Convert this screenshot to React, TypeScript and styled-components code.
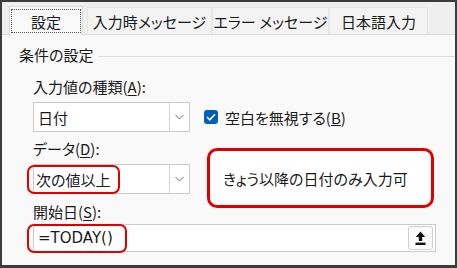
import React from "react";
import styled, { createGlobalStyle } from "styled-components";

const GlobalStyle = createGlobalStyle`
  html, body {
    margin: 0;
    padding: 0;
    background: #ffffff;
  }
  body {
    font-family: "Noto Sans CJK JP", "Noto Sans", sans-serif;
    font-feature-settings: "palt";
    color: #1a1a1a;
  }
`;

const Frame = styled.div`
  width: 457px;
  height: 268px;
  box-sizing: border-box;
  border: 2px solid #3c3c3c;
  border-bottom-width: 3px;
  background: #efefef;
  display: flex;
  flex-direction: column;
  overflow: hidden;
`;

const TabStrip = styled.div`
  display: flex;
  align-items: flex-end;
  height: 32px;
  padding-left: 7px;
  box-sizing: border-box;
`;

const Tab = styled.div<{ $w: number; $active?: boolean }>`
  width: ${(p) => p.$w}px;
  height: ${(p) => (p.$active ? 29 : 27)}px;
  margin-right: ${(p) => (p.$active ? 4 : 0)}px;
  box-sizing: border-box;
  display: flex;
  align-items: center;
  justify-content: center;
  font-size: 15px;
  background: ${(p) => (p.$active ? "#f9f9f9" : "#f3f3f3")};
  border: 1px solid ${(p) => (p.$active ? "#dcdcdc" : "#e6e6e6")};
  border-bottom: none;
  position: relative;
  top: ${(p) => (p.$active ? 1 : 0)}px;
`;

const FocusBox = styled.span`
  display: flex;
  align-items: center;
  justify-content: center;
  width: calc(100% - 2px);
  height: calc(100% - 4px);
  box-sizing: border-box;
  border: 1px dotted #555;
`;

const Panel = styled.div`
  flex: 1;
  background: #f9f9f9;
  border-top: 1px solid #dcdcdc;
  padding: 10px 19px 0 17px;
  display: flex;
  flex-direction: column;
`;

const GroupHeader = styled.div`
  display: flex;
  align-items: center;
  gap: 6px;
  margin-right: -19px;
  font-size: 15px;
  line-height: 20px;
  &::after {
    content: "";
    flex: 1;
    height: 1px;
    background: #dcdcdc;
    margin-top: 2px;
  }
`;

const Form = styled.div`
  display: grid;
  grid-template-columns: 157px 1fr;
  column-gap: 14px;
  margin: 12px 0 0 14px;
`;

const Label = styled.div<{ $top?: number }>`
  grid-column: 1;
  font-size: 15px;
  line-height: 20px;
  margin-top: ${(p) => p.$top ?? 0}px;
  white-space: nowrap;
  u {
    text-underline-offset: 2px;
  }
`;

const Select = styled.div`
  grid-column: 1;
  height: 30px;
  margin-top: 5px;
  box-sizing: border-box;
  border: 1px solid #cacaca;
  background: #ffffff;
  display: flex;
  align-items: center;
  font-size: 15px;
`;

const SelectText = styled.div`
  flex: 1;
  padding-left: 4px;
  display: flex;
  align-items: center;
`;

const Arrow = styled.div`
  width: 19px;
  height: 100%;
  border-left: 1px solid #d4d4d4;
  display: flex;
  align-items: center;
  justify-content: center;
`;

const Marked = styled.span<{ $w: number; $pad: number; $latin?: boolean }>`
  display: inline-flex;
  align-items: center;
  box-sizing: border-box;
  width: ${(p) => p.$w}px;
  height: 29px;
  margin-left: -11px;
  padding-left: ${(p) => p.$pad}px;
  border: 2.5px solid #e00000;
  border-radius: 7px;
  font-size: 15px;
  font-family: ${(p) =>
    p.$latin ? `"DejaVu Sans", "Noto Sans CJK JP", sans-serif` : "inherit"};
`;

const CheckRow = styled.div`
  grid-column: 2;
  grid-row: 2;
  margin-top: 5px;
  height: 30px;
  display: flex;
  align-items: center;
  gap: 7px;
  font-size: 15px;
`;

const CheckBox = styled.span`
  width: 14px;
  height: 14px;
  border-radius: 3px;
  background: #005fb8;
  display: flex;
  align-items: center;
  justify-content: center;
`;

const Note = styled.div`
  grid-column: 2;
  grid-row: 3 / span 3;
  align-self: start;
  margin: 16px 2px 0 3px;
  height: 60px;
  box-sizing: border-box;
  border: 3px solid #e00000;
  border-radius: 10px;
  background: #ffffff;
  display: flex;
  align-items: center;
  padding-left: 13px;
  font-size: 15px;
`;

const Field = styled.div`
  grid-column: 1 / span 2;
  height: 28px;
  margin-top: 2px;
  box-sizing: border-box;
  border: 1px solid #cacaca;
  background: #ffffff;
  display: flex;
  align-items: center;
  justify-content: space-between;
  padding-right: 2px;
`;

const PickButton = styled.div`
  width: 25px;
  height: 24px;
  box-sizing: border-box;
  border: 1px solid #cfcfcf;
  border-radius: 3px;
  background: #fbfbfb;
  display: flex;
  align-items: center;
  justify-content: center;
`;

const Chevron = () => (
  <svg width="9" height="6" viewBox="0 0 9 6">
    <path d="M0.5 1 L4.5 5 L8.5 1" fill="none" stroke="#6a6a6a" strokeWidth="1" />
  </svg>
);

const Check = () => (
  <svg width="10" height="8" viewBox="0 0 10 8">
    <path d="M1 4 L3.8 6.8 L9 1.2" fill="none" stroke="#ffffff" strokeWidth="1.6" />
  </svg>
);

const UpIcon = () => (
  <svg width="11" height="15" viewBox="0 0 11 15">
    <path d="M5.5 0.5 L10.2 6 L7.2 6 L7.2 10 L3.8 10 L3.8 6 L0.8 6 Z" fill="#111" />
    <rect x="0.5" y="11.6" width="10" height="2.4" fill="#111" />
  </svg>
);

export default function App() {
  return (
    <>
      <GlobalStyle />
      <Frame>
        <TabStrip>
          <Tab $w={74} $active>
            <FocusBox>設定</FocusBox>
          </Tab>
          <Tab $w={125}>入力時メッセージ</Tab>
          <Tab $w={117}>エラー メッセージ</Tab>
          <Tab $w={99}>日本語入力</Tab>
        </TabStrip>
        <Panel>
          <GroupHeader>条件の設定</GroupHeader>
          <Form>
            <Label>
              入力値の種類(<u>A</u>):
            </Label>
            <Select>
              <SelectText>日付</SelectText>
              <Arrow>
                <Chevron />
              </Arrow>
            </Select>
            <CheckRow>
              <CheckBox>
                <Check />
              </CheckBox>
              <span>
                空白を無視する(<u>B</u>)
              </span>
            </CheckRow>
            <Label $top={7}>
              データ(<u>D</u>):
            </Label>
            <Select>
              <SelectText>
                <Marked $w={93} $pad={7}>
                  次の値以上
                </Marked>
              </SelectText>
              <Arrow>
                <Chevron />
              </Arrow>
            </Select>
            <Note>きょう以降の日付のみ入力可</Note>
            <Label $top={8}>
              開始日(<u>S</u>):
            </Label>
            <Field>
              <SelectText>
                <Marked $w={100} $pad={9} $latin>
                  =TODAY()
                </Marked>
              </SelectText>
              <PickButton>
                <UpIcon />
              </PickButton>
            </Field>
          </Form>
        </Panel>
      </Frame>
    </>
  );
}
